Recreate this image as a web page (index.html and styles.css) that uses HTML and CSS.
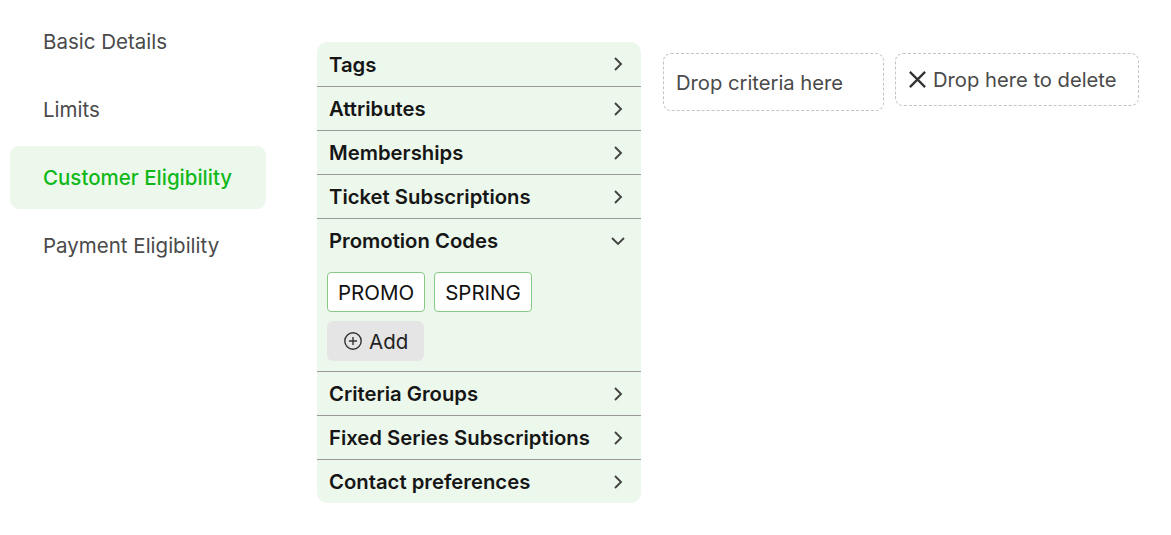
FILE: index.html
```html
<!DOCTYPE html>
<html>

<head>
    <meta charset="UTF-8">
    <title>Customer Eligibility</title>
    <link rel="stylesheet" href="styles.css">
</head>

<body>
    <div id="page">
        <nav class="side-nav">
            <div class="nav-item">Basic Details</div>
            <div class="nav-item">Limits</div>
            <div class="nav-item active">Customer Eligibility</div>
            <div class="nav-item">Payment Eligibility</div>
        </nav>

        <div class="criteria-list">
            <div class="criteria-row">
                <span>Tags</span>
                <svg class="chevron" viewBox="0 0 16 16"><path d="M5 2 11 8 5 14"/></svg>
            </div>
            <div class="criteria-row">
                <span>Attributes</span>
                <svg class="chevron" viewBox="0 0 16 16"><path d="M5 2 11 8 5 14"/></svg>
            </div>
            <div class="criteria-row">
                <span>Memberships</span>
                <svg class="chevron" viewBox="0 0 16 16"><path d="M5 2 11 8 5 14"/></svg>
            </div>
            <div class="criteria-row">
                <span>Ticket Subscriptions</span>
                <svg class="chevron" viewBox="0 0 16 16"><path d="M5 2 11 8 5 14"/></svg>
            </div>
            <div class="criteria-section">
                <div class="criteria-row open">
                    <span>Promotion Codes</span>
                    <svg class="chevron" viewBox="0 0 16 16"><path d="M2 5 8 11 14 5"/></svg>
                </div>
                <div class="code-list">
                    <div class="code-chip">PROMO</div>
                    <div class="code-chip">SPRING</div>
                </div>
                <button class="add-btn">
                    <svg viewBox="0 0 20 20"><circle cx="10" cy="10" r="8.2"/><path d="M10 6v8M6 10h8"/></svg>
                    Add
                </button>
            </div>
            <div class="criteria-row">
                <span>Criteria Groups</span>
                <svg class="chevron" viewBox="0 0 16 16"><path d="M5 2 11 8 5 14"/></svg>
            </div>
            <div class="criteria-row">
                <span>Fixed Series Subscriptions</span>
                <svg class="chevron" viewBox="0 0 16 16"><path d="M5 2 11 8 5 14"/></svg>
            </div>
            <div class="criteria-row">
                <span>Contact preferences</span>
                <svg class="chevron" viewBox="0 0 16 16"><path d="M5 2 11 8 5 14"/></svg>
            </div>
        </div>

        <div class="drop-zones">
            <div class="drop-zone">Drop criteria here</div>
            <div class="drop-zone delete">
                <svg viewBox="0 0 20 20"><path d="M2 2l16 16M18 2 2 18"/></svg>
                Drop here to delete
            </div>
        </div>
    </div>
</body>

</html>
```

FILE: styles.css
```css
body {
    margin: 0;
    background-color: #fff;
    font-family: Inter, "Liberation Sans", sans-serif;
    color: #222;
}

#page {
    display: flex;
    align-items: flex-start;
    padding: 10px 10px 0 10px;
}

/* left navigation */
.side-nav {
    display: flex;
    flex-direction: column;
    gap: 5px;
    width: 256px;
    margin-right: 51px;
}

.nav-item {
    height: 63px;
    display: flex;
    align-items: center;
    padding-left: 33px;
    font-size: 20.5px;
    color: #4a4a4a;
    border-radius: 9px;
}

.nav-item.active {
    background-color: #edf8ec;
    color: #11b81a;
    font-weight: 500;
}

/* criteria accordion */
.criteria-list {
    width: 324px;
    margin-top: 32px;
    background-color: #edf8ec;
    border-radius: 10px;
    overflow: hidden;
}

.criteria-row,
.criteria-section {
    border-top: 1px solid #9a9a9a;
}

.criteria-list > :first-child {
    border-top: none;
}

.criteria-row {
    height: 43px;
    display: flex;
    align-items: center;
    justify-content: space-between;
    padding: 0 15px 0 12px;
    font-size: 20.3px;
    font-weight: 600;
    color: #161616;
}

.criteria-list > .criteria-row:first-child {
    height: 44px;
}

.criteria-section .criteria-row {
    border-top: none;
}

.chevron {
    width: 16px;
    height: 16px;
    fill: none;
    stroke: #444;
    stroke-width: 1.9;
}

.code-list {
    display: flex;
    gap: 9px;
    padding: 10px 10px 0 10px;
}

.code-chip {
    height: 38px;
    display: flex;
    align-items: center;
    padding: 0 10px;
    background-color: #fff;
    border: 1px solid #86c982;
    border-radius: 4px;
    font-size: 20.5px;
    color: #111;
}

.add-btn {
    display: flex;
    align-items: center;
    gap: 6px;
    height: 40px;
    width: 97px;
    margin: 9px 0 10px 10px;
    padding: 0 0 0 16px;
    border: none;
    border-radius: 6px;
    background-color: #e5e5e5;
    font-family: inherit;
    font-size: 20.5px;
    color: #222;
}

.add-btn svg {
    width: 20px;
    height: 20px;
    fill: none;
    stroke: #333;
    stroke-width: 1.4;
}

/* drop targets */
.drop-zones {
    display: flex;
    align-items: flex-start;
    gap: 11px;
    margin: 43px 0 0 22px;
}

.drop-zone {
    display: flex;
    align-items: center;
    gap: 6px;
    height: 56px;
    padding: 0 12px;
    border: 1px dashed #c4c4c4;
    border-radius: 8px;
    font-size: 20.2px;
    color: #4a4a4a;
    width: 195px;
}

.drop-zone.delete {
    height: 51px;
    width: 218px;
}

.drop-zone svg {
    width: 19px;
    height: 19px;
    flex-shrink: 0;
    fill: none;
    stroke: #333;
    stroke-width: 2.4;
}
```
